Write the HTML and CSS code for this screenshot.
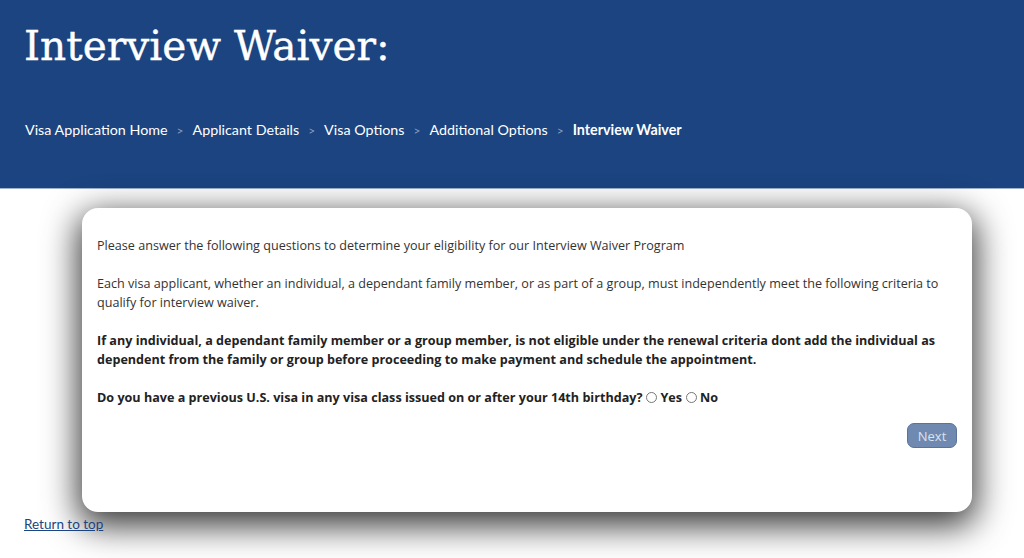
FILE: index.html
```html
<!DOCTYPE html>
<html lang="en">
<head>
<meta charset="utf-8">
<title>Interview Waiver</title>
<link rel="stylesheet" href="styles.css">
</head>
<body>
<header class="banner">
  <h1 class="title">Interview Waiver:</h1>
  <nav class="crumbs">
    <a href="#">Visa Application Home</a><span class="sep">&gt;</span>
    <a href="#">Applicant Details</a><span class="sep">&gt;</span>
    <a href="#">Visa Options</a><span class="sep">&gt;</span>
    <a href="#">Additional Options</a><span class="sep">&gt;</span>
    <span class="current">Interview Waiver</span>
  </nav>
</header>
<main class="page">
  <section class="card">
    <p>Please answer the following questions to determine your eligibility for our Interview Waiver Program</p>
    <p>Each visa applicant, whether an individual, a dependant family member, or as part of a group, must independently meet the following criteria to qualify for interview waiver.</p>
    <p class="strong">If any individual, a dependant family member or a group member, is not eligible under the renewal criteria dont add the individual as dependent from the family or group before proceeding to make payment and schedule the appointment.</p>
    <p class="strong question">Do you have a previous U.S. visa in any visa class issued on or after your 14th birthday?
      <label class="opt"><input type="radio" name="prev">Yes</label>
      <label class="opt"><input type="radio" name="prev">No</label>
    </p>
    <div class="actions"><button class="next" disabled>Next</button></div>
  </section>
  <a class="top-link" href="#">Return to top</a>
</main>
</body>
</html>
```
FILE: styles.css
```css
html, body {
  margin: 0;
  padding: 0;
  background: #fff;
}

body {
  font-family: "Open Sans", "Noto Sans", sans-serif;
  height: 558px;
  overflow: hidden;
}

.banner {
  background: #1b4480;
  height: 189px;
  box-sizing: border-box;
  padding: 20px 24px 0;
  border-bottom: 1px solid #9fb1cc;
}

.title {
  margin: 0;
  font-family: "DejaVu Serif", "Liberation Serif", serif;
  font-weight: normal;
  font-size: 40.7px;
  line-height: 52px;
  color: #fff;
  -webkit-text-stroke: 0.4px #fff;
}

.crumbs {
  margin-top: 49px;
  font-family: Lato, "Open Sans", sans-serif;
  font-size: 14.3px;
  color: #fff;
  display: flex;
  align-items: baseline;
  padding-left: 1px;
}

.crumbs a {
  color: #fff;
  text-decoration: none;
}

.crumbs .sep {
  color: #8a9dbd;
  margin: 0 9px;
  font-size: 12px;
}

.crumbs .current {
  font-weight: bold;
}

.page {
  padding: 19px 52px 0 82px;
}

.card {
  background: #fff;
  border-radius: 16px;
  box-shadow: 0 10px 34px 4px rgba(0, 0, 0, 0.78);
  padding: 28px 15px 0;
  height: 304px;
  box-sizing: border-box;
  color: #333;
  font-size: 12.6px;
  line-height: 19px;
}

.card p {
  margin: 0 0 19px;
}

.card .strong {
  font-weight: bold;
  color: #222;
}

.question {
  display: flex;
  align-items: center;
  flex-wrap: wrap;
}

.opt {
  display: inline-flex;
  align-items: center;
}

.opt input {
  margin: 0 3px 0 4px;
  width: 11px;
  height: 11px;
}

.actions {
  display: flex;
  justify-content: flex-end;
  margin-top: -3px;
}

.next {
  background: #6f89b0;
  color: #dbe3ee;
  border: 1px solid #5a7399;
  border-radius: 7px;
  font-family: "Open Sans", sans-serif;
  font-size: 13px;
  width: 50px;
  height: 25px;
  padding: 0;
}

.top-link {
  display: inline-block;
  margin: 0 0 0 -58px;
  font-family: Lato, "Open Sans", sans-serif;
  font-size: 13.5px;
  color: #1b4480;
}
```
